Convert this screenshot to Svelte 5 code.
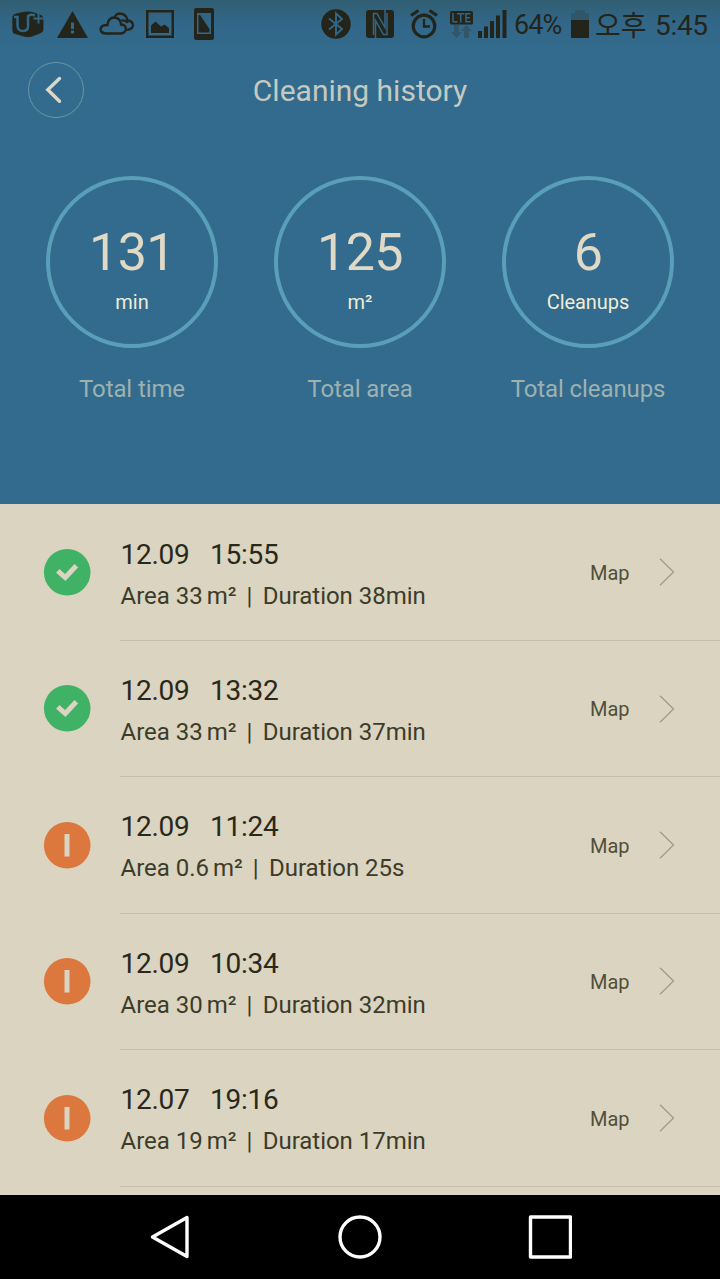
<script lang="ts">
    type Stat = { value: number; unit: string; label: string };
    type Cleanup = { date: string; time: string; area: string; duration: string; done: boolean };

    const stats: Stat[] = [
        { value: 131, unit: 'min', label: 'Total time' },
        { value: 125, unit: 'm²', label: 'Total area' },
        { value: 6, unit: 'Cleanups', label: 'Total cleanups' },
    ];

    const cleanups: Cleanup[] = [
        { date: '12.09', time: '15:55', area: '33', duration: '38min', done: true },
        { date: '12.09', time: '13:32', area: '33', duration: '37min', done: true },
        { date: '12.09', time: '11:24', area: '0.6', duration: '25s', done: false },
        { date: '12.09', time: '10:34', area: '30', duration: '32min', done: false },
        { date: '12.07', time: '19:16', area: '19', duration: '17min', done: false },
    ];
</script>

<div class="screen">
    <header>
        <div class="status-bar">
            <div class="notifications">
                <!-- carrier -->
                <svg width="32" height="27" viewBox="0 0 32 27">
                    <path class="ink" d="M4 2.500 12 .8Q17 0 22 1.500L29 4Q31.400 5 31.400 8V19Q31.400 21 28.500 22.200L20 25.600Q17 26.600 12 25.600L3 23Q.3 22 .3 19V7Q.3 3.500 4 2.500Z" />
                    <path class="cut bold" d="M2 6H5.500V15Q6 20 11 20T16 15V5Q19 3 23 4.500" />
                    <path class="cut" d="M26.500 2V12.500M21.500 7.500H31.500" />
                </svg>
                <svg width="31" height="27" viewBox="0 0 31 27">
                    <path class="ink" d="M15.500 0 31 27H0Z" />
                    <path class="hole" d="M14 11.500h3v6.500h-3zM14 19.500h3v3h-3z" />
                </svg>
                <svg width="36" height="24" viewBox="0 0 36 24">
                    <path class="line" d="M7 21.500H21.500Q26.500 21 27 17Q26.500 12.500 22 12.500Q21.500 6 15.500 5.500Q9 5.500 8.500 13Q2 13 1.500 17Q2 21.500 7 21.500Z" />
                    <path class="line" d="M15.500 5.500Q17 1.500 21 1.500Q27.500 2 28.500 8.500Q34 9 34 13.500Q33.500 17.500 28 17.800M22.500 8.500Q27 8 28.500 11" />
                </svg>
                <svg width="28" height="28" viewBox="0 0 28 28">
                    <path class="ink" fill-rule="evenodd" d="M0 0H28V28H0ZM2.500 2.500V25.500H25.500V2.500Z" />
                    <path class="ink" d="M5 15.500 9.500 11.500 15 16.500 18.500 14.500 23 18V23H5Z" />
                </svg>
                <svg width="20" height="32" viewBox="0 0 20 32">
                    <path class="ink" fill-rule="evenodd" d="M2 0H18Q20 0 20 2V30Q20 32 18 32H2Q0 32 0 30V2Q0 0 2 0ZM3 5V26H17V5Z" />
                    <path class="ink" d="M4.500 7H6L15.500 21V24.500H4.500Z" />
                </svg>
            </div>
            <div class="indicators">
                <svg width="30" height="30" viewBox="0 0 30 30">
                    <circle class="ink" cx="15" cy="15" r="14.700" />
                    <path class="cut" d="M8 9.500 21 20 15 25.500V4.500L21 10 8 20.500" />
                </svg>
                <svg class="nfc" width="28" height="28" viewBox="0 0 28 28">
                    <path class="ink" d="M3 0H25Q28 0 28 3V25Q28 28 25 28H3Q0 28 0 25V3Q0 0 3 0Z" />
                    <path class="cut thin" d="M7.500 25V3.500H11L19 17.500V0M9.500 28V10.500L17.500 24.500H21V3" />
                </svg>
                <svg class="alarm" width="28" height="30" viewBox="0 0 28 30">
                    <circle class="heavy" cx="14" cy="17" r="10.800" />
                    <path class="heavy" d="M1 6.500 8.500 1.500M19.500 1.500 27 6.500" />
                    <path class="line" d="M14 10V17.500H20" />
                </svg>
                <svg class="lte" width="23" height="27" viewBox="0 0 23 27">
                    <rect class="ink" width="23" height="13.500" rx="1.500" />
                    <path class="cut thin" d="M3 2V10.800H7.500M7 2.800H14.500M10.700 3V11.500M20.500 2.800H16V10.800H20.500M16 6.800H20" />
                    <path class="faint" d="M4 14H9V21H12L6.500 27 1 21H4ZM14 27V20H11L16.500 14 22 20H19V27Z" />
                </svg>
                <svg class="signal" width="29" height="28" viewBox="0 0 29 28">
                    <path class="ink" d="M0 21h4v7H0zM6 16.500h4V28H6zM12 11h4v17h-4zM18 5.500h4V28h-4zM24.500 0h4v28h-4z" />
                </svg>
                <span class="percent">64%</span>
                <svg class="battery" width="18" height="28" viewBox="0 0 18 28">
                    <path class="faint" d="M0 3H4V0H14V3H18V10H0Z" />
                    <path class="ink" d="M0 10h18v18H0z" />
                </svg>
                <span class="meridiem">오후</span>
                <span class="clock">5:45</span>
            </div>
        </div>

        <div class="title-bar">
            <button class="back" aria-label="Back">
                <svg width="56" height="56" viewBox="0 0 56 56">
                    <path d="M31.500 16.500 19.800 27.700 31.500 39.200" />
                </svg>
            </button>
            <h1>Cleaning history</h1>
        </div>

        <div class="stats">
            {#each stats as stat}
                <div class="stat">
                    <div class="ring">
                        <span class="value">{stat.value}</span>
                        <span class="unit">{stat.unit}</span>
                    </div>
                    <span class="label">{stat.label}</span>
                </div>
            {/each}
        </div>
    </header>

    <main>
        {#each cleanups as item}
            <div class="row">
                <svg class="state" class:done={item.done} width="48" height="48" viewBox="0 0 48 48">
                    <circle cx="24.200" cy="24.300" r="23.300" />
                    {#if item.done}
                        <path d="M14.800 22.800 22.300 29.500 33.300 17.700" />
                    {:else}
                        <path d="M24 13V35.500" />
                    {/if}
                </svg>
                <div class="body">
                    <div class="info">
                        <div class="when"><span>{item.date}</span><span>{item.time}</span></div>
                        <div class="detail">
                            <span>Area {item.area}<span class="sq">m²</span></span>
                            <span class="bar">|</span>
                            <span>Duration {item.duration}</span>
                        </div>
                    </div>
                    <span class="map">Map</span>
                    <svg class="chevron" width="16" height="28" viewBox="0 0 16 28">
                        <path d="M1 .8 14.500 14 1 27.200" />
                    </svg>
                </div>
            </div>
        {/each}
    </main>

    <nav>
        <svg width="44" height="44" viewBox="0 0 44 44">
            <path d="M40 2.500V41.500L5.500 22Z" />
        </svg>
        <svg width="44" height="44" viewBox="0 0 44 44">
            <circle cx="22" cy="22" r="20" />
        </svg>
        <svg width="44" height="44" viewBox="0 0 44 44">
            <rect x="2.500" y="2" width="40" height="40" />
        </svg>
    </nav>
</div>

<style>
    :global(body) {
        margin: 0;
        background: #000;
    }

    .screen {
        display: flex;
        flex-direction: column;
        width: 720px;
        height: 1279px;
        overflow: hidden;
        font-family: Roboto, 'Noto Sans CJK KR', sans-serif;
        background: #dad4c0;
    }

    svg {
        display: block;
        flex: none;
    }

    header {
        flex: none;
        height: 504px;
        background: linear-gradient(#315f73, #326789 24px, #326b8d 48px);
    }

    .status-bar {
        display: flex;
        justify-content: space-between;
        height: 48px;
        padding: 0 12px;
        color: #24251a;
    }

    .notifications,
    .indicators {
        display: flex;
        align-items: center;
    }

    .notifications {
        gap: 13px;
    }

    .notifications svg:nth-child(3) {
        margin-left: -2px;
    }

    .notifications svg:nth-child(4) {
        margin-left: -2px;
    }

    .notifications svg:nth-child(5) {
        margin-left: 7px;
    }

    .ink {
        fill: #24251a;
    }

    .hole {
        fill: #326687;
    }

    .faint {
        fill: #31566a;
    }

    .cut {
        fill: none;
        stroke: #326687;
        stroke-width: 1.9;
    }

    .bold {
        stroke-width: 2.5;
    }

    .thin {
        stroke-width: 1.5;
    }

    .line {
        fill: none;
        stroke: #24251a;
        stroke-width: 2.3;
    }

    .heavy {
        fill: none;
        stroke: #24251a;
        stroke-width: 3.2;
    }

    .nfc {
        margin-left: 15px;
    }

    .alarm {
        margin-left: 16px;
    }

    .lte {
        margin-left: 12px;
    }

    .signal {
        margin-left: 5px;
    }

    .percent {
        width: 57px;
        margin-left: 7px;
        font-size: 27px;
        letter-spacing: -0.9px;
        line-height: 50px;
        margin-top: 2px;
    }

    .battery {
        margin-right: 6px;
    }

    .meridiem {
        width: 60px;
        font-family: 'Noto Sans CJK KR', sans-serif;
        font-size: 28px;
        font-weight: 400;
        line-height: 44px;
    }

    .clock {
        width: 53px;
        margin-top: 3px;
        font-size: 28px;
        letter-spacing: -0.3px;
        line-height: 50px;
    }

    .title-bar {
        display: grid;
        grid-template-columns: 56px 1fr 56px;
        align-items: center;
        height: 84px;
        padding: 0 28px;
    }

    .back {
        box-sizing: border-box;
        width: 56px;
        height: 56px;
        padding: 0;
        border: 1px solid #6f96a3;
        border-radius: 50%;
        background: none;
    }

    .back svg {
        margin: -1px;
        fill: none;
        stroke: #dcd8c6;
        stroke-width: 3.4;
        stroke-linecap: round;
    }

    h1 {
        margin: 1px 0 0;
        color: #c5cac0;
        font-size: 30px;
        font-weight: 400;
        text-align: center;
    }

    .stats {
        display: grid;
        grid-template-columns: repeat(3, 228px);
        padding: 44px 18px 0;
    }

    .stat {
        display: flex;
        flex-direction: column;
        align-items: center;
    }

    .ring {
        box-sizing: border-box;
        display: flex;
        flex-direction: column;
        align-items: center;
        width: 172px;
        height: 172px;
        padding-top: 42px;
        border: 4px solid #5a9fba;
        border-radius: 50%;
    }

    .value {
        color: #dfd9c5;
        font-size: 52px;
        letter-spacing: -0.5px;
        line-height: 62px;
    }

    .unit {
        margin-top: 6px;
        color: #f0ecd6;
        font-size: 20px;
        letter-spacing: -0.05px;
        line-height: 24px;
    }

    .label {
        margin-top: 27px;
        color: #9db1b0;
        font-size: 24px;
        letter-spacing: -0.1px;
        line-height: 28px;
    }

    main {
        flex: 1;
        min-height: 0;
        overflow: hidden;
    }

    .row {
        display: flex;
        height: 136.4px;
        padding-left: 43px;
    }

    .state {
        margin: 44px 29px 0 0;
        fill: #dc773e;
    }

    .state.done {
        fill: #3fb265;
    }

    .state path {
        fill: none;
        stroke: #dad4c0;
        stroke-width: 5;
    }

    .body {
        box-sizing: border-box;
        display: flex;
        flex: 1;
        align-items: center;
        height: 137px;
        padding-right: 45px;
        border-bottom: 1px solid #c5bfac;
    }

    .info {
        flex: 1;
        margin-top: 5px;
        white-space: nowrap;
    }

    .when {
        display: flex;
        gap: 20.5px;
        padding-left: 0.5px;
        color: #29281a;
        font-size: 28px;
        letter-spacing: -0.25px;
        line-height: 34px;
    }

    .detail {
        display: flex;
        margin-top: 8px;
        padding-left: 0.5px;
        color: #3d3b29;
        font-size: 24px;
        letter-spacing: -0.02px;
        line-height: 32px;
    }

    .sq {
        margin-left: 4px;
    }

    .bar {
        margin: 0 10.4px 0 10px;
    }

    .map {
        margin: 2px 29.500px 0 0;
        color: #504f3a;
        font-size: 20px;
    }

    .chevron {
        margin-top: 0.5px;
        fill: none;
        stroke: #a19c87;
        stroke-width: 1.3;
    }

    nav {
        box-sizing: border-box;
        display: flex;
        flex: none;
        justify-content: space-between;
        height: 84px;
        padding: 20px 148px 0 147px;
        background: #000;
    }

    nav svg {
        fill: none;
        stroke: #fff;
        stroke-width: 3.4;
        stroke-linejoin: round;
    }
</style>
